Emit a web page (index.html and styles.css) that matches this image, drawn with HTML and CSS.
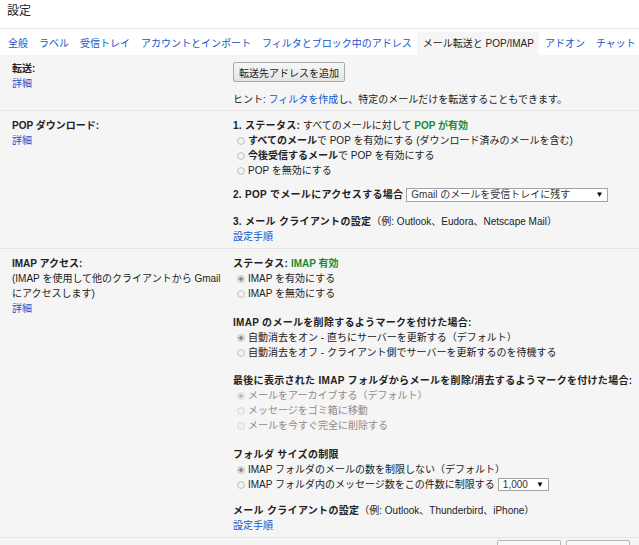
FILE: index.html
```html
<!DOCTYPE html>
<html lang="ja">
<head>
  <meta charset="UTF-8" />
  <title>設定 - メール転送と POP/IMAP</title>
  <link rel="stylesheet" href="styles.css">
</head>
<body>
  <div class="page-title">設定</div>

  <div class="tabs">
    <a href="#">全般</a>
    <a href="#">ラベル</a>
    <a href="#">受信トレイ</a>
    <a href="#">アカウントとインポート</a>
    <a href="#">フィルタとブロック中のアドレス</a>
    <a href="#" class="active">メール転送と POP/IMAP</a>
    <a href="#">アドオン</a>
    <a href="#">チャット</a>
  </div>

  <div class="settings">
    <!-- 転送 -->
    <div class="row row-forward">
      <div class="label">
        <b>転送:</b><br>
        <a href="#">詳細</a>
      </div>
      <div class="value">
        <button class="btn btn-add">転送先アドレスを追加</button>
        <p class="hint">ヒント: <a href="#">フィルタを作成</a>し、特定のメールだけを転送することもできます。</p>
      </div>
    </div>

    <!-- POP -->
    <div class="row">
      <div class="label">
        <b>POP ダウンロード:</b><br>
        <a href="#">詳細</a>
      </div>
      <div class="value">
        <div class="group">
          <p><b class="h">1. ステータス:</b> すべてのメールに対して <b class="ok">POP が有効</b></p>
          <p class="opt"><span class="radio"></span><b>すべてのメール</b>で POP を有効にする (ダウンロード済みのメールを含む)</p>
          <p class="opt"><span class="radio"></span><b>今後受信するメール</b>で POP を有効にする</p>
          <p class="opt"><span class="radio"></span>POP を無効にする</p>
        </div>
        <div class="group select-row g-pop2">
          <b class="h">2. POP でメールにアクセスする場合</b>
          <span class="select select-wide">Gmail のメールを受信トレイに残す<span class="arrow">▼</span></span>
        </div>
        <div class="group g-pop3">
          <p><b class="h">3. メール クライアントの設定</b>（例: Outlook、Eudora、Netscape Mail）</p>
          <a href="#">設定手順</a>
        </div>
      </div>
    </div>

    <!-- IMAP -->
    <div class="row">
      <div class="label">
        <b>IMAP アクセス:</b><br>
        (IMAP を使用して他のクライアントから Gmail にアクセスします)<br>
        <a href="#">詳細</a>
      </div>
      <div class="value">
        <div class="group">
          <p><b class="h">ステータス:</b> <b class="ok">IMAP 有効</b></p>
          <p class="opt"><span class="radio checked"></span>IMAP を有効にする</p>
          <p class="opt"><span class="radio"></span>IMAP を無効にする</p>
        </div>
        <div class="group g-14">
          <p><b class="h">IMAP のメールを削除するようマークを付けた場合:</b></p>
          <p class="opt"><span class="radio checked"></span>自動消去をオン - 直ちにサーバーを更新する（デフォルト）</p>
          <p class="opt"><span class="radio"></span>自動消去をオフ - クライアント側でサーバーを更新するのを待機する</p>
        </div>
        <div class="group g-13">
          <p><b class="h">最後に表示された IMAP フォルダからメールを削除/消去するようマークを付けた場合:</b></p>
          <p class="opt disabled"><span class="radio checked"></span>メールをアーカイブする（デフォルト）</p>
          <p class="opt disabled"><span class="radio"></span>メッセージをゴミ箱に移動</p>
          <p class="opt disabled"><span class="radio"></span>メールを今すぐ完全に削除する</p>
        </div>
        <div class="group g-14">
          <p><b class="h">フォルダ サイズの制限</b></p>
          <p class="opt"><span class="radio checked"></span>IMAP フォルダのメールの数を制限しない（デフォルト）</p>
          <p class="opt"><span class="radio"></span>IMAP フォルダ内のメッセージ数をこの件数に制限する
            <span class="select select-small">1,000<span class="arrow">▼</span></span>
          </p>
        </div>
        <div class="group g-11">
          <p><b class="h">メール クライアントの設定</b>（例: Outlook、Thunderbird、iPhone）</p>
          <a href="#">設定手順</a>
        </div>
      </div>
    </div>

    <div class="footer">
      <button class="btn btn-save">変更を保存</button>
      <button class="btn btn-cancel">キャンセル</button>
    </div>
  </div>
</body>
</html>
```

FILE: styles.css
```css
* {
  box-sizing: border-box;
  margin: 0;
  padding: 0;
}

body {
  font-family: "Liberation Sans", "Noto Sans CJK JP", sans-serif;
  font-size: 10px;
  line-height: 15px;
  color: #222;
  background: #fff;
  overflow: hidden;
}

a {
  color: #15c;
  text-decoration: none;
}

.page-title {
  font-size: 12px;
  padding: 4px 7px 9px;
  border-bottom: 1px solid #e5e5e5;
}

.tabs {
  display: flex;
  white-space: nowrap;
  padding: 3px 0 0 2.5px;
  overflow: hidden;
}

.tabs a {
  padding: 0 5.5px;
  line-height: 23px;
}

.tabs .active {
  background: #f5f5f5;
  color: #222;
}

.settings {
  background: #f5f5f5;
  min-height: 600px;
}

.row {
  display: grid;
  grid-template-columns: 209px 1fr;
  column-gap: 12px;
  padding: 7px 12px 4px;
  border-bottom: 1px solid #e5e5e5;
}

.row-forward {
  padding: 6px 12px 3px;
}

.value p {
  white-space: nowrap;
}

.h {
  letter-spacing: 0.3px;
}

.ok {
  color: #1a8a34;
}

.btn {
  font-family: inherit;
  font-size: 10px;
  color: #222;
  border: 1px solid #a9a9a9;
  border-radius: 2px;
  background: linear-gradient(#f7f7f7, #e4e4e4);
  height: 20px;
  padding: 0 5px;
}

.btn-add {
  margin-top: 1px;
}

.hint {
  margin-top: 10px;
}

.group + .group {
  margin-top: 14px;
}

.group.g-pop2 {
  margin-top: 9px;
}

.group.g-pop3 {
  margin-top: 12px;
}

.group.g-13 {
  margin-top: 13px;
}

.group.g-11 {
  margin-top: 11px;
}

.opt {
  display: flex;
  align-items: center;
  height: 15px;
}

.opt.disabled {
  color: #8c8c8c;
}

.radio {
  display: inline-block;
  width: 8px;
  height: 8px;
  margin: 0 3px 0 4px;
  border: 1px solid #c6c6c6;
  border-radius: 50%;
  background: radial-gradient(circle, #fafafa 0, #e2e2e2 100%);
  flex-shrink: 0;
}

.radio.checked {
  background: radial-gradient(circle, #8d8d8d 0 1.6px, #e6e6e6 2.2px);
}

.disabled .radio {
  border-color: #dcdcdc;
}

.disabled .radio.checked {
  background: radial-gradient(circle, #bdbdbd 0 1.6px, #eee 2.2px);
}

.select-row {
  display: flex;
  align-items: center;
  height: 15px;
}

.select {
  display: inline-flex;
  align-items: center;
  justify-content: space-between;
  height: 14px;
  padding: 0 4px;
  border: 1px solid #a3a3a3;
  background: #fff;
  color: #333;
  font-size: 10px;
  line-height: 12px;
}

.select-wide {
  width: 202px;
  margin-left: 3px;
}

.select-small {
  width: 51px;
  height: 13px;
  margin-left: 3px;
}

.arrow {
  font-size: 8px;
  color: #000;
}

.footer {
  display: flex;
  justify-content: flex-end;
  gap: 5px;
  padding: 2px 9px 0;
}

.btn-save,
.btn-cancel {
  height: 22px;
  background: #fafafa;
  border-color: #b5b5b5;
  padding: 0 6px;
}
```
